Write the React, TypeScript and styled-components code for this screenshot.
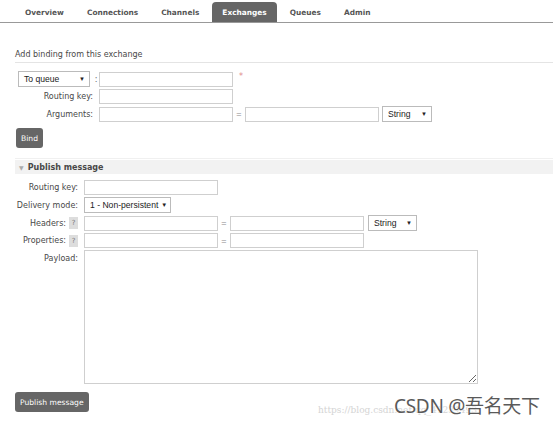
import React from "react";
import styled, { createGlobalStyle } from "styled-components";

const GlobalStyle = createGlobalStyle`
  html, body {
    margin: 0;
    padding: 0;
    background: #ffffff;
  }
  body {
    font-family: "DejaVu Sans", Verdana, sans-serif;
    font-size: 8px;
    color: #484848;
    width: 553px;
    height: 422px;
    overflow: hidden;
  }
`;

const Page = styled.div`
  position: relative;
  width: 553px;
  height: 422px;
`;

// nav tabs
const TabBar = styled.ul`
  display: flex;
  margin: 0;
  padding: 2px 0 0 15px;
  list-style: none;
  border-bottom: 1px solid #999;
  height: 20px;
`;

const Tab = styled.li<{ $active?: boolean }>`
  display: flex;
  align-items: center;
  padding: 0 10px;
  margin-right: 3px;
  height: 20px;
  font-weight: bold;
  font-size: 7.4px;
  color: ${(p) => (p.$active ? "#ffffff" : "#555")};
  background: ${(p) => (p.$active ? "#666666" : "transparent")};
  border-radius: 4px 4px 0 0;
`;

const Section = styled.div`
  margin: 0 0 0 15px;
`;

const SectionTitle = styled.div`
  margin-top: 27px;
  padding-bottom: 3px;
  border-bottom: 1px solid #e4e4e4;
  font-size: 8px;
  color: #484848;
`;

const Form = styled.div<{ $pt: number }>`
  display: flex;
  flex-direction: column;
  gap: 2px;
  padding-top: ${(p) => p.$pt}px;
`;

const Row = styled.div`
  display: flex;
  align-items: center;
  min-height: 15px;
`;

const Label = styled.div<{ $w: number; $start?: boolean }>`
  width: ${(p) => p.$w}px;
  flex-shrink: 0;
  display: flex;
  justify-content: ${(p) => (p.$start ? "flex-start" : "flex-end")};
  align-items: center;
  gap: 3px;
  padding-right: ${(p) => (p.$start ? 0 : 6)}px;
  padding-left: ${(p) => (p.$start ? 3 : 0)}px;
  box-sizing: border-box;
  font-size: 8px;
  color: #484848;
  white-space: nowrap;
`;

const TextInput = styled.input`
  width: 134px;
  height: 15px;
  box-sizing: border-box;
  border: 1px solid #cfcfcf;
  padding: 0 3px;
  margin: 0;
  font-size: 8px;
  background: #fff;
  outline: none;
`;

const Select = styled.div<{ $w: number; $ml?: number }>`
  width: ${(p) => p.$w}px;
  height: 16px;
  margin-left: ${(p) => p.$ml ?? 0}px;
  flex-shrink: 0;
  box-sizing: border-box;
  border: 1px solid #bbb;
  background: #fff;
  display: flex;
  align-items: center;
  justify-content: space-between;
  padding: 0 4px 0 5px;
  font-family: "Liberation Sans", Arial, sans-serif;
  font-size: 8.6px;
  color: #222;
  white-space: nowrap;
  &::after {
    content: "▼";
    font-size: 6px;
    color: #222;
    margin-left: 3px;
  }
`;

const Colon = styled.span`
  width: 7px;
  text-align: center;
  color: #666;
`;

const Equals = styled.span<{ $w: number }>`
  width: ${(p) => p.$w}px;
  text-align: center;
  color: #888;
  font-family: "Liberation Sans", Arial, sans-serif;
  font-size: 9px;
`;

const Required = styled.span`
  margin-left: 6px;
  color: #e08a8a;
  font-size: 8px;
  align-self: flex-start;
  margin-top: 1px;
`;

const Button = styled.button<{ $mt?: number; $ml?: number }>`
  align-self: flex-start;
  margin-top: ${(p) => p.$mt ?? 0}px;
  margin-left: ${(p) => p.$ml ?? 0}px;
  height: 20px;
  padding: 0 5px;
  border: none;
  border-radius: 3px;
  background: #666;
  color: #fff;
  font-family: "DejaVu Sans", Verdana, sans-serif;
  font-size: 7.6px;
`;

const Divider = styled.div`
  margin: 10px 0 1px 15px;
  border-top: 1px solid #f0f0f0;
`;

const SectionHeader = styled.div`
  display: flex;
  align-items: center;
  gap: 4px;
  height: 14px;
  margin-left: 15px;
  padding-left: 4px;
  background: #f2f2f2;
  font-weight: bold;
  font-size: 8px;
  color: #484848;
  &::before {
    content: "▼";
    font-size: 6px;
    color: #aaa;
  }
`;

const Help = styled.span`
  display: inline-flex;
  align-items: center;
  justify-content: center;
  width: 9px;
  height: 12px;
  background: #dddddd;
  color: #777;
  font-size: 7px;
`;

const Payload = styled.div`
  display: flex;
  align-items: flex-start;
`;

const PayloadLabel = styled(Label)`
  margin-top: 4px;
`;

const PayloadArea = styled.textarea`
  width: 394px;
  height: 134px;
  box-sizing: border-box;
  border: 1px solid #cfcfcf;
  margin: 0;
  resize: both;
  outline: none;
`;

const Watermark = styled.div`
  position: absolute;
  left: 318px;
  top: 391px;
  width: 240px;
  height: 28px;
`;

const WatermarkUrl = styled.span`
  position: absolute;
  left: 0;
  top: 14px;
  font-family: "DejaVu Serif", "Liberation Serif", serif;
  font-size: 9px;
  color: #d4d4d4;
  white-space: nowrap;
`;

const WatermarkBrand = styled.span`
  position: absolute;
  left: 76px;
  top: 0;
  font-family: "Noto Sans", "Noto Sans CJK SC", sans-serif;
  font-size: 19px;
  color: #5a5a5a;
  white-space: nowrap;
  text-shadow: 0 0 2px #fff, 0 0 2px #fff;
  letter-spacing: -0.3px;
`;

const tabs = ["Overview", "Connections", "Channels", "Exchanges", "Queues", "Admin"];

export default function App() {
  return (
    <Page>
      <GlobalStyle />
      <TabBar>
        {tabs.map((t) => (
          <Tab key={t} $active={t === "Exchanges"}>
            {t}
          </Tab>
        ))}
      </TabBar>

      <Section>
        <SectionTitle>Add binding from this exchange</SectionTitle>
        <Form $pt={8}>
          <Row>
            <Label $w={84} $start>
              <Select $w={72}>To queue</Select>
              <Colon>:</Colon>
            </Label>
            <TextInput />
            <Required>*</Required>
          </Row>
          <Row>
            <Label $w={84}>Routing key:</Label>
            <TextInput />
          </Row>
          <Row>
            <Label $w={84}>Arguments:</Label>
            <TextInput />
            <Equals $w={12}>=</Equals>
            <TextInput />
            <Select $w={50} $ml={3}>String</Select>
          </Row>
          <Button $mt={4} $ml={1}>Bind</Button>
        </Form>
      </Section>

      <Divider />
      <SectionHeader>Publish message</SectionHeader>

      <Section>
        <Form $pt={6}>
          <Row>
            <Label $w={69}>Routing key:</Label>
            <TextInput />
          </Row>
          <Row>
            <Label $w={69}>Delivery mode:</Label>
            <Select $w={87}>1 - Non-persistent</Select>
          </Row>
          <Row>
            <Label $w={69}>
              Headers: <Help>?</Help>
            </Label>
            <TextInput />
            <Equals $w={12}>=</Equals>
            <TextInput />
            <Select $w={49} $ml={4}>String</Select>
          </Row>
          <Row>
            <Label $w={69}>
              Properties: <Help>?</Help>
            </Label>
            <TextInput />
            <Equals $w={12}>=</Equals>
            <TextInput />
          </Row>
          <Payload>
            <PayloadLabel $w={69}>Payload:</PayloadLabel>
            <PayloadArea />
          </Payload>
          <Button $mt={6}>Publish message</Button>
        </Form>
      </Section>

      <Watermark>
        <WatermarkUrl>https://blog.csdn.net/qq_41234493</WatermarkUrl>
        <WatermarkBrand>CSDN @吾名天下</WatermarkBrand>
      </Watermark>
    </Page>
  );
}
